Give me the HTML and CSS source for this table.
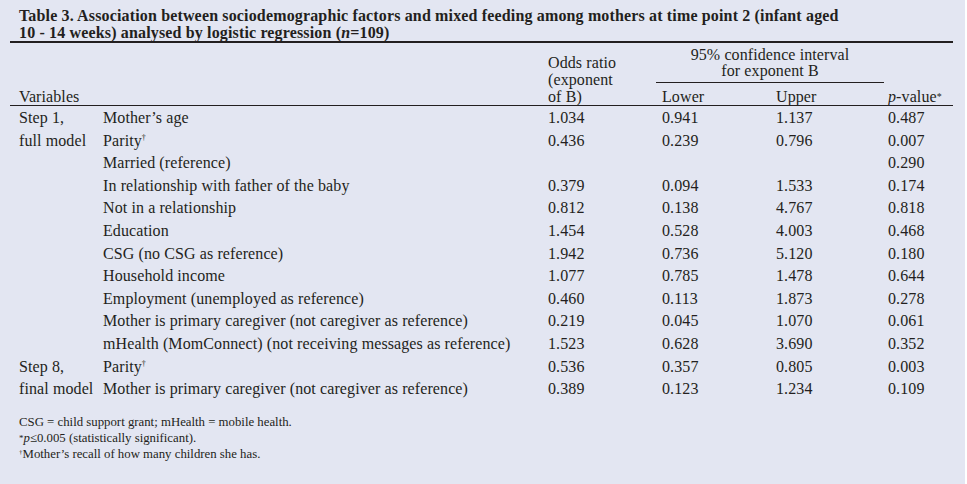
FILE: index.html
```html
<!DOCTYPE html>
<html lang="en">
<head>
<meta charset="utf-8">
<title>Table 3</title>
<link rel="stylesheet" href="styles.css">
</head>
<body>
<div class="panel">
  <h1 class="title">Table 3. Association between sociodemographic factors and mixed feeding among mothers at time point 2 (infant aged<br>10 - 14 weeks) analysed by logistic regression (<i>n</i>=109)</h1>
  <table class="data">
    <colgroup>
      <col class="c-step"><col class="c-var"><col class="c-or"><col class="c-lo"><col class="c-up"><col class="c-p">
    </colgroup>
    <thead>
      <tr>
        <th class="h-bottom first" colspan="2" rowspan="2">Variables</th>
        <th class="h-bottom" rowspan="2">Odds ratio<br>(exponent<br>of B)</th>
        <th class="ci" colspan="2"><div class="ci-label">95% confidence interval<br>for exponent B</div></th>
        <th class="h-bottom" rowspan="2"><i>p</i>-value<sup class="ast">*</sup></th>
      </tr>
      <tr>
        <th class="h-sub">Lower</th>
        <th class="h-sub">Upper</th>
      </tr>
    </thead>
    <tbody>
      <tr class="r-first"><td class="first">Step 1,</td><td>Mother’s age</td><td>1.034</td><td>0.941</td><td>1.137</td><td>0.487</td></tr>
      <tr><td class="first">full model</td><td>Parity<sup class="dag">†</sup></td><td>0.436</td><td>0.239</td><td>0.796</td><td>0.007</td></tr>
      <tr><td class="first"></td><td>Married (reference)</td><td></td><td></td><td></td><td>0.290</td></tr>
      <tr><td class="first"></td><td>In relationship with father of the baby</td><td>0.379</td><td>0.094</td><td>1.533</td><td>0.174</td></tr>
      <tr><td class="first"></td><td>Not in a relationship</td><td>0.812</td><td>0.138</td><td>4.767</td><td>0.818</td></tr>
      <tr><td class="first"></td><td>Education</td><td>1.454</td><td>0.528</td><td>4.003</td><td>0.468</td></tr>
      <tr><td class="first"></td><td>CSG (no CSG as reference)</td><td>1.942</td><td>0.736</td><td>5.120</td><td>0.180</td></tr>
      <tr><td class="first"></td><td>Household income</td><td>1.077</td><td>0.785</td><td>1.478</td><td>0.644</td></tr>
      <tr><td class="first"></td><td>Employment (unemployed as reference)</td><td>0.460</td><td>0.113</td><td>1.873</td><td>0.278</td></tr>
      <tr><td class="first"></td><td>Mother is primary caregiver (not caregiver as reference)</td><td>0.219</td><td>0.045</td><td>1.070</td><td>0.061</td></tr>
      <tr><td class="first"></td><td>mHealth (MomConnect) (not receiving messages as reference)</td><td>1.523</td><td>0.628</td><td>3.690</td><td>0.352</td></tr>
      <tr><td class="first">Step 8,</td><td>Parity<sup class="dag">†</sup></td><td>0.536</td><td>0.357</td><td>0.805</td><td>0.003</td></tr>
      <tr><td class="first">final model</td><td>Mother is primary caregiver (not caregiver as reference)</td><td>0.389</td><td>0.123</td><td>1.234</td><td>0.109</td></tr>
    </tbody>
  </table>
  <div class="notes">
    <p>CSG = child support grant; mHealth = mobile health.</p>
    <p><sup class="n-ast">*</sup><i>p</i>≤0.005 (statistically significant).</p>
    <p><sup class="n-dag">†</sup>Mother’s recall of how many children she has.</p>
  </div>
</div>
</body>
</html>
```
FILE: styles.css
```css
html, body {
  margin: 0;
  padding: 0;
  background: #ffffff;
}

.panel {
  width: 965px;
  height: 484px;
  background: #e3e6f2;
  color: #231f20;
  font-family: "Liberation Serif", Tinos, "Noto Serif", "DejaVu Serif", serif;
  box-sizing: border-box;
  padding-top: 7px;
  overflow: hidden;
}

.title {
  margin: 0;
  padding-left: 19px;
  font-size: 16px;
  letter-spacing: 0.15px;
  line-height: 17px;
  font-weight: bold;
}

.data {
  margin-left: 10px;
  width: 943px;
  table-layout: fixed;
  border-collapse: separate;
  border-spacing: 0;
  border-top: 2px solid #231f20;
  font-size: 16px;
  letter-spacing: 0.1px;
}

.c-step { width: 93px; }
.c-var { width: 445px; }
.c-or { width: 114px; }
.c-lo { width: 114px; }
.c-up { width: 112px; }
.c-p { width: 65px; }

.data th {
  font-weight: normal;
  text-align: left;
  padding: 0;
  line-height: 17px;
}

.data th.h-bottom {
  vertical-align: bottom;
  border-bottom: 1px solid #231f20;
}

.data th.h-sub {
  vertical-align: bottom;
  border-bottom: 1px solid #231f20;
  padding-top: 5px;
}

.data th.ci {
  vertical-align: top;
}

.ci-label {
  text-align: center;
  line-height: 16px;
  padding-top: 4px;
  padding-bottom: 3px;
  margin-left: -6px;
  margin-right: 4px;
  border-bottom: 1px solid #231f20;
}

.data td {
  padding: 0;
  line-height: 22.6px;
  vertical-align: top;
  white-space: nowrap;
}

.data .first {
  padding-left: 9px;
}

.data tr.r-first td {
  padding-top: 1px;
}

.dag {
  font-size: 8px;
  vertical-align: 6px;
  line-height: 0;
}

.ast {
  font-size: 10px;
  vertical-align: 2px;
  line-height: 0;
}

.notes {
  padding-left: 19px;
  margin-top: 13px;
  font-size: 12.8px;
  line-height: 16px;
}

.notes p {
  margin: 0;
}

.n-ast {
  font-size: 9px;
  vertical-align: 1px;
  line-height: 0;
}

.n-dag {
  font-size: 7px;
  vertical-align: 4px;
  line-height: 0;
}
```
